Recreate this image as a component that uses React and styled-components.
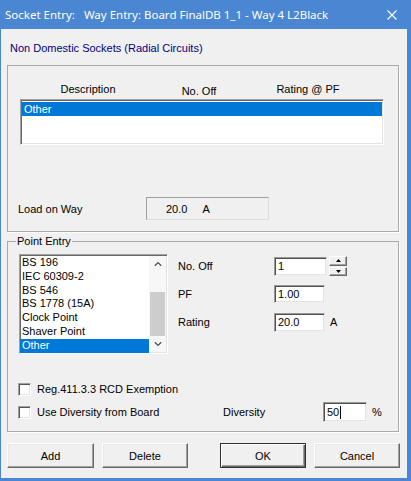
import styled, { createGlobalStyle } from "styled-components";

const GlobalStyle = createGlobalStyle`
  html, body {
    margin: 0;
    padding: 0;
    background: #fff;
  }
  body {
    font-family: "Liberation Sans", Arial, sans-serif;
    font-size: 11px;
    color: #000;
  }
  * {
    box-sizing: border-box;
  }
`;

const pointTypes = ["BS 196", "IEC 60309-2", "BS 546", "BS 1778 (15A)", "Clock Point", "Shaver Point", "Other"];

export default function App() {
  return (
    <>
      <GlobalStyle />
      <Window>
        <TitleBar>
          <Title>{"Socket Entry:   Way Entry: Board FinalDB 1_1 - Way 4 L2Black"}</Title>
          <CloseIcon width="10" height="10" viewBox="0 0 10 10">
            <path d="M0.5 0.5 L9.5 9.5 M9.5 0.5 L0.5 9.5" stroke="#fff" strokeWidth="1.1" fill="none" />
          </CloseIcon>
        </TitleBar>

        <Client>
          <Subtitle>Non Domestic Sockets (Radial Circuits)</Subtitle>

          <Group $pad="16px 12px 11px 10px" $mt={10}>
            <HeaderRow>
              <HeaderCell>Description</HeaderCell>
              <HeaderCell $drop={2}>No. Off</HeaderCell>
              <HeaderCell>Rating @ PF</HeaderCell>
            </HeaderRow>
            <ListBox $w={364} $h={46} $pad="1px" $ml={2} $mt={3}>
              <Items>
                <Item $selected>Other</Item>
              </Items>
            </ListBox>
            <LoadRow>
              <LoadLabel>Load on Way</LoadLabel>
              <ReadOnlyBox>
                <span>20.0</span>
                <Unit $ml={15}>A</Unit>
              </ReadOnlyBox>
            </LoadRow>
          </Group>

          <Group $pad="6px 10px 9px 8px" $mt={2}>
            <Legend>Point Entry</Legend>
            <PointRow>
              <ListBox $w={149} $h={100} $pad="0" $ml={3} $mt={0}>
                <Items>
                  {pointTypes.map(t => (
                    <Item key={t} $selected={t === "Other"} $h={13.8}>{t}</Item>
                  ))}
                </Items>
                <ScrollBar>
                  <ArrowCell>
                    <svg width="8" height="6" viewBox="0 0 8 6">
                      <polyline points="0.8,4.8 4,1.6 7.2,4.8" stroke="#505050" strokeWidth="1.3" fill="none" />
                    </svg>
                  </ArrowCell>
                  <Thumb />
                  <ArrowCell>
                    <svg width="8" height="6" viewBox="0 0 8 6">
                      <polyline points="0.8,1.2 4,4.4 7.2,1.2" stroke="#505050" strokeWidth="1.3" fill="none" />
                    </svg>
                  </ArrowCell>
                </ScrollBar>
              </ListBox>

              <Fields>
                <FieldLabel>No. Off</FieldLabel>
                <FieldCell>
                  <Edit $w={53} $h={19}>1</Edit>
                  <Spinner>
                    <SpinButton>
                      <svg width="5" height="3" viewBox="0 0 5 3"><polygon points="0,3 2.5,0 5,3" fill="#000" /></svg>
                    </SpinButton>
                    <SpinButton>
                      <svg width="5" height="3" viewBox="0 0 5 3"><polygon points="0,0 2.5,3 5,0" fill="#000" /></svg>
                    </SpinButton>
                  </Spinner>
                </FieldCell>
                <FieldLabel>PF</FieldLabel>
                <FieldCell>
                  <Edit $w={51} $h={18}>1.00</Edit>
                </FieldCell>
                <FieldLabel>Rating</FieldLabel>
                <FieldCell>
                  <Edit $w={51} $h={19}>20.0</Edit>
                  <Unit $ml={5}>A</Unit>
                </FieldCell>
              </Fields>
            </PointRow>

            <CheckRow $mt={25}>
              <CheckBox />
              <CheckLabel>Reg.411.3.3 RCD Exemption</CheckLabel>
            </CheckRow>
            <CheckRow $mt={3}>
              <CheckBox />
              <CheckLabel $w={186}>Use Diversity from Board</CheckLabel>
              <DiversityLabel>Diversity</DiversityLabel>
              <Edit $w={44} $h={20}>
                50<Caret />
              </Edit>
              <Unit $ml={5}>%</Unit>
            </CheckRow>
          </Group>

          <ButtonRow>
            <Button $w={87}>Add</Button>
            <Button $w={86} $ml={8}>Delete</Button>
            <Button $w={86} $ml={32} $default>OK</Button>
            <Button $w={86} $ml={8}>Cancel</Button>
          </ButtonRow>
        </Client>
      </Window>
    </>
  );
}

const Window = styled.div`
  width: 411px;
  height: 481px;
  background: #4a86d2;
  display: flex;
  flex-direction: column;
  overflow: hidden;
`;

const TitleBar = styled.div`
  height: 29px;
  flex-shrink: 0;
  display: flex;
  align-items: center;
  padding-left: 5px;
  color: #fff;
  font-family: "Noto Sans", "Open Sans", sans-serif;
  font-size: 11.5px;
`;

const Title = styled.div`
  flex: 1;
  white-space: pre;
`;

const CloseIcon = styled.svg`
  margin-right: 14px;
`;

const Client = styled.div`
  flex: 1;
  margin: 0 4px 3px 1px;
  background: #f0f0f0;
  padding: 12px 8px 10px 6px;
  display: flex;
  flex-direction: column;
`;

const Subtitle = styled.div`
  color: #000080;
  line-height: 14px;
  padding-left: 3px;
`;

const Group = styled.fieldset`
  margin: ${p => p.$mt}px 0 0 0;
  padding: ${p => p.$pad};
  border: 1px solid #a9a9a9;
  box-shadow: 1px 1px 0 #fff;
  min-width: 0;
`;

const Legend = styled.legend`
  padding: 0 1px;
  line-height: 14px;
  font-size: 11px;
`;

const HeaderRow = styled.div`
  display: grid;
  grid-template-columns: 136px 86px 132px;
  height: 14px;
  margin-left: 2px;
  line-height: 14px;
`;

const HeaderCell = styled.div`
  text-align: center;
  padding-top: ${p => p.$drop || 0}px;
`;

const ListBox = styled.div`
  width: ${p => p.$w}px;
  height: ${p => p.$h}px;
  flex-shrink: 0;
  margin: ${p => p.$mt}px 0 0 ${p => p.$ml}px;
  padding: ${p => p.$pad};
  background: #fff;
  border: 1px solid;
  border-color: #a0a0a0 #fff #fff #a0a0a0;
  box-shadow: inset 1px 1px 0 #696969, inset -1px -1px 0 #e3e3e3;
  display: flex;
`;

const Items = styled.div`
  flex: 1;
  display: flex;
  flex-direction: column;
  padding-top: 1px;
`;

const Item = styled.div`
  height: ${p => p.$h || 14}px;
  line-height: ${p => p.$h || 14}px;
  padding-left: 2px;
  white-space: nowrap;
  background: ${p => (p.$selected ? "#0078d7" : "transparent")};
  color: ${p => (p.$selected ? "#fff" : "#000")};
`;

const ScrollBar = styled.div`
  width: 17px;
  margin: 1px 1px 1px 0;
  background: #f7f7f7;
  display: flex;
  flex-direction: column;
`;

const ArrowCell = styled.div`
  height: 17px;
  display: flex;
  align-items: center;
  justify-content: center;
`;

const Thumb = styled.div`
  height: 44px;
  margin: 19px 1px 0 1px;
  background: #cdcdcd;
  flex-shrink: 0;
  margin-bottom: auto;
`;

const LoadRow = styled.div`
  display: flex;
  align-items: center;
  height: 23px;
  margin-top: 52px;
`;

const LoadLabel = styled.div`
  width: 128px;
`;

const ReadOnlyBox = styled.div`
  width: 123px;
  height: 23px;
  display: flex;
  align-items: center;
  padding-left: 19px;
  border: 1px solid;
  border-color: #a0a0a0 #dcdcdc #dcdcdc #a0a0a0;
  background: #f0f0f0;
`;

const Unit = styled.span`
  margin-left: ${p => p.$ml}px;
`;

const PointRow = styled.div`
  display: flex;
  align-items: flex-start;
`;

const Fields = styled.div`
  display: grid;
  grid-template-columns: 96px auto;
  grid-auto-rows: 18px;
  row-gap: 10px;
  align-items: center;
  margin: 3px 0 0 10px;
`;

const FieldLabel = styled.div`
  line-height: 14px;
`;

const FieldCell = styled.div`
  display: flex;
  align-items: center;
  height: 18px;
`;

const Edit = styled.div`
  width: ${p => p.$w}px;
  height: ${p => p.$h}px;
  flex-shrink: 0;
  display: flex;
  align-items: center;
  padding-left: 3px;
  background: #fff;
  border: 1px solid;
  border-color: #9a9a9a #f0f0f0 #f0f0f0 #9a9a9a;
  box-shadow: inset 1px 1px 0 #505050, inset -1px -1px 0 #e3e3e3;
`;

const Caret = styled.span`
  display: inline-block;
  width: 1px;
  height: 13px;
  background: #000;
  margin-left: 1px;
`;

const Spinner = styled.div`
  margin-left: 2px;
  width: 18px;
  height: 20px;
  display: flex;
  flex-direction: column;
  gap: 1px;
`;

const SpinButton = styled.div`
  flex: 1;
  display: flex;
  align-items: center;
  justify-content: center;
  background: #f0f0f0;
  border: 1px solid;
  border-color: #fff #696969 #696969 #fff;
  box-shadow: inset -1px -1px 0 #a0a0a0;
`;

const CheckRow = styled.div`
  display: flex;
  align-items: center;
  height: 20px;
  margin: ${p => p.$mt}px 0 0 2px;
`;

const CheckBox = styled.div`
  width: 13px;
  height: 13px;
  flex-shrink: 0;
  background: #fff;
  border: 1px solid;
  border-color: #a0a0a0 #fff #fff #a0a0a0;
  box-shadow: inset 1px 1px 0 #555, inset -1px -1px 0 #e3e3e3;
`;

const CheckLabel = styled.div`
  margin-left: 6px;
  width: ${p => (p.$w ? `${p.$w}px` : "auto")};
  white-space: nowrap;
`;

const DiversityLabel = styled.div`
  width: 100px;
`;

const ButtonRow = styled.div`
  display: flex;
  margin-top: 11px;
`;

const Button = styled.div`
  width: ${p => p.$w}px;
  height: 25px;
  flex-shrink: 0;
  margin-left: ${p => p.$ml || 0}px;
  display: flex;
  align-items: center;
  justify-content: center;
  background: #f0f0f0;
  border: 1px solid;
  border-color: ${p => (p.$default ? "#303030" : "#fff #696969 #696969 #fff")};
  box-shadow: ${p =>
    p.$default
      ? "inset 1px 1px 0 #fff, inset -1px -1px 0 #696969, inset -2px -2px 0 #a0a0a0"
      : "inset -1px -1px 0 #a0a0a0, inset 1px 1px 0 #e8e8e8"};
`;
